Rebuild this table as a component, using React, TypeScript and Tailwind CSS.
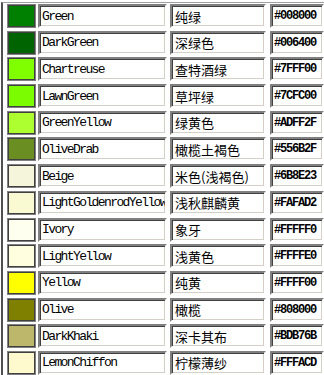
import React from 'react';

interface ColorRow {
  name: string;
  cn: string;
  hex: string;
  swatch: string;
}

const rows: ColorRow[] = [
  { name: 'Green', cn: '纯绿', hex: '#008000', swatch: '#008000' },
  { name: 'DarkGreen', cn: '深绿色', hex: '#006400', swatch: '#006400' },
  { name: 'Chartreuse', cn: '查特酒绿', hex: '#7FFF00', swatch: '#7FFF00' },
  { name: 'LawnGreen', cn: '草坪绿', hex: '#7CFC00', swatch: '#7CFC00' },
  { name: 'GreenYellow', cn: '绿黄色', hex: '#ADFF2F', swatch: '#ADFF2F' },
  { name: 'OliveDrab', cn: '橄榄土褐色', hex: '#556B2F', swatch: '#6B8E23' },
  { name: 'Beige', cn: '米色(浅褐色)', hex: '#6B8E23', swatch: '#F5F5DC' },
  { name: 'LightGoldenrodYellow', cn: '浅秋麒麟黄', hex: '#FAFAD2', swatch: '#FAFAD2' },
  { name: 'Ivory', cn: '象牙', hex: '#FFFFF0', swatch: '#FFFFF0' },
  { name: 'LightYellow', cn: '浅黄色', hex: '#FFFFE0', swatch: '#FFFFE0' },
  { name: 'Yellow', cn: '纯黄', hex: '#FFFF00', swatch: '#FFFF00' },
  { name: 'Olive', cn: '橄榄', hex: '#808000', swatch: '#808000' },
  { name: 'DarkKhaki', cn: '深卡其布', hex: '#BDB76B', swatch: '#BDB76B' },
  { name: 'LemonChiffon', cn: '柠檬薄纱', hex: '#FFFACD', swatch: '#FFFACD' },
];

// sunken 3d box, like an old-school text field
const sunken =
  'border-2 border-t-[#808080] border-l-[#808080] border-b-white border-r-white shadow-[inset_1px_1px_0_#404040,inset_-1px_-1px_0_#d4d0c8] bg-white flex items-center overflow-hidden whitespace-nowrap';

const Row: React.FC<{ row: ColorRow }> = ({ row }) => (
  <div className="flex h-[24px] shrink-0">
    <div
      className="ml-[4px] w-[29px] border border-[#808080] shadow-[inset_0_0_0_1px_#404040]"
      style={{ backgroundColor: row.swatch }}
    />
    <div className={`${sunken} ml-[2px] w-[129px] pl-[2px]`}>
      <span className="font-['Liberation_Mono',monospace] text-[13px] leading-none tracking-[-1.6px] text-black">
        {row.name}
      </span>
    </div>
    <div className={`${sunken} ml-[3px] w-[96px] pl-[3px]`}>
      <span className="font-['Noto_Sans_CJK_SC',sans-serif] text-[13px] leading-none text-black">
        {row.cn}
      </span>
    </div>
    <div className={`${sunken} ml-[4px] w-[54px] pl-[2px]`}>
      <span className="font-['Liberation_Mono',monospace] font-bold text-[12px] leading-none tracking-[-1.2px] text-black">
        {row.hex}
      </span>
    </div>
  </div>
);

export default function App() {
  return (
    <div className="w-[324px] h-[375px] overflow-hidden bg-white pt-[2px] pl-[1px]">
      <div className="h-full border-t border-l-2 border-t-[#a0a0a0] border-l-[#505050] pt-[1px] flex flex-col gap-[2.7px]">
        {rows.map((row) => (
          <Row key={row.name} row={row} />
        ))}
      </div>
    </div>
  );
}
